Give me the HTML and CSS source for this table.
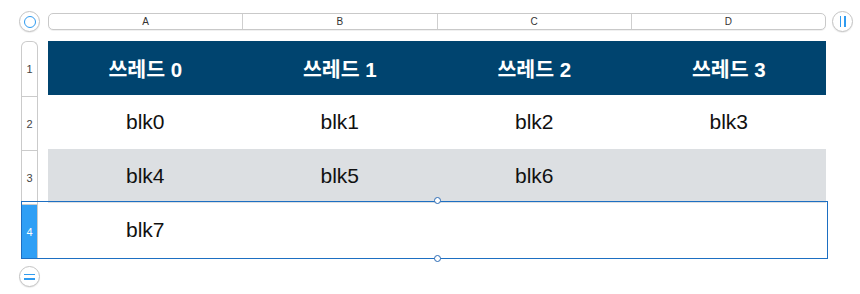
FILE: index.html
```html
<!DOCTYPE html>
<html lang="ko">
<head>
<meta charset="utf-8">
<link rel="stylesheet" href="styles.css">
</head>
<body>
<div class="page">
  <div class="top">
    <div class="circle-btn"><span class="ring"></span></div>
    <div class="colbar">
      <div class="colh">A</div>
      <div class="colh">B</div>
      <div class="colh">C</div>
      <div class="colh">D</div>
    </div>
    <div class="circle-btn"><span class="bars"><i></i><i></i></span></div>
  </div>
  <div class="main">
    <div class="rowheads">
      <div class="rh">1</div>
      <div class="rh">2</div>
      <div class="rh">3</div>
      <div class="rh rh-sel">4</div>
    </div>
    <div class="table">
      <div class="row head">
        <div class="cell">쓰레드 0</div>
        <div class="cell">쓰레드 1</div>
        <div class="cell">쓰레드 2</div>
        <div class="cell">쓰레드 3</div>
      </div>
      <div class="row">
        <div class="cell">blk0</div>
        <div class="cell">blk1</div>
        <div class="cell">blk2</div>
        <div class="cell">blk3</div>
      </div>
      <div class="row alt">
        <div class="cell">blk4</div>
        <div class="cell">blk5</div>
        <div class="cell">blk6</div>
        <div class="cell"></div>
      </div>
      <div class="row">
        <div class="cell">blk7</div>
        <div class="cell"></div>
        <div class="cell"></div>
        <div class="cell"></div>
      </div>
      <span class="handle h-top"></span>
      <span class="handle h-bot"></span>
    </div>
    <div class="selection"></div>
  </div>
  <div class="bottom">
    <div class="circle-btn"><span class="eq"><i></i><i></i></span></div>
  </div>
</div>
</body>
</html>
```
FILE: styles.css
```css
html, body {
  margin: 0;
  padding: 0;
  background: #ffffff;
}
.page {
  width: 860px;
  height: 294px;
  font-family: "Liberation Sans", "Noto Sans CJK KR", sans-serif;
  position: relative;
}
.top {
  display: flex;
  align-items: center;
  padding: 11px 0 0 19px;
  height: 21px;
}
.circle-btn {
  width: 21px;
  height: 21px;
  box-sizing: border-box;
  border: 1px solid #c4c4c4;
  border-radius: 50%;
  background: #fff;
  display: flex;
  align-items: center;
  justify-content: center;
  box-shadow: 0 1px 1px rgba(0,0,0,0.08);
}
.ring {
  width: 12px;
  height: 12px;
  box-sizing: border-box;
  border: 1.5px solid #2f9bf0;
  border-radius: 50%;
}
.bars {
  display: flex;
  gap: 3px;
}
.bars i {
  display: block;
  width: 1.5px;
  height: 11px;
  background: #2f9bf0;
}
.eq {
  display: flex;
  flex-direction: column;
  gap: 3px;
}
.eq i {
  display: block;
  width: 11px;
  height: 1.5px;
  background: #2f9bf0;
}
.colbar {
  margin-left: 8px;
  width: 778px;
  height: 17px;
  box-sizing: border-box;
  border: 1px solid #c9c9c9;
  border-radius: 5px;
  display: flex;
  background: #fff;
  box-shadow: 0 1px 0 rgba(0,0,0,0.06);
}
.colh {
  flex: 1;
  display: flex;
  align-items: center;
  justify-content: center;
  font-size: 10px;
  color: #333;
  border-left: 1px solid #cfcfcf;
}
.colh:first-child {
  border-left: none;
}
.top .circle-btn:last-child {
  margin-left: 6px;
}
.main {
  display: flex;
  margin-top: 9px;
  padding-left: 21px;
  position: relative;
}
.rowheads {
  width: 17px;
  box-sizing: border-box;
  border: 1px solid #cbcbcb;
  border-bottom: none;
  border-radius: 6px 6px 0 0;
  display: flex;
  flex-direction: column;
}
.rh {
  height: 54px;
  display: flex;
  align-items: center;
  justify-content: center;
  font-size: 11px;
  color: #444;
  border-top: 1px solid #cbcbcb;
  box-sizing: border-box;
}
.rh:first-child {
  border-top: none;
}
.rh-sel {
  background: #2f9ff5;
  color: #fff;
}
.table {
  margin-left: 10px;
  width: 778px;
  position: relative;
}
.row {
  display: flex;
  height: 54px;
}
.cell {
  flex: 1;
  display: flex;
  align-items: center;
  justify-content: center;
  font-size: 21px;
  color: #111;
}
.row.head {
  background: #00446f;
}
.row.head .cell {
  color: #fff;
  font-weight: bold;
  font-size: 20.5px;
}
.row.alt {
  background: #dcdfe2;
}
.selection {
  position: absolute;
  left: 21px;
  top: 160px;
  width: 807px;
  height: 58px;
  box-sizing: border-box;
  border: 1.5px solid #1d6fc2;
  pointer-events: none;
}
.handle {
  position: absolute;
  left: 386px;
  width: 7px;
  height: 7px;
  box-sizing: border-box;
  border: 1.5px solid #2a6ab5;
  border-radius: 50%;
  background: #fff;
  z-index: 2;
}
.h-top {
  top: 156px;
}
.h-bot {
  top: 214px;
}
.bottom {
  padding: 8px 0 0 19px;
}
```
